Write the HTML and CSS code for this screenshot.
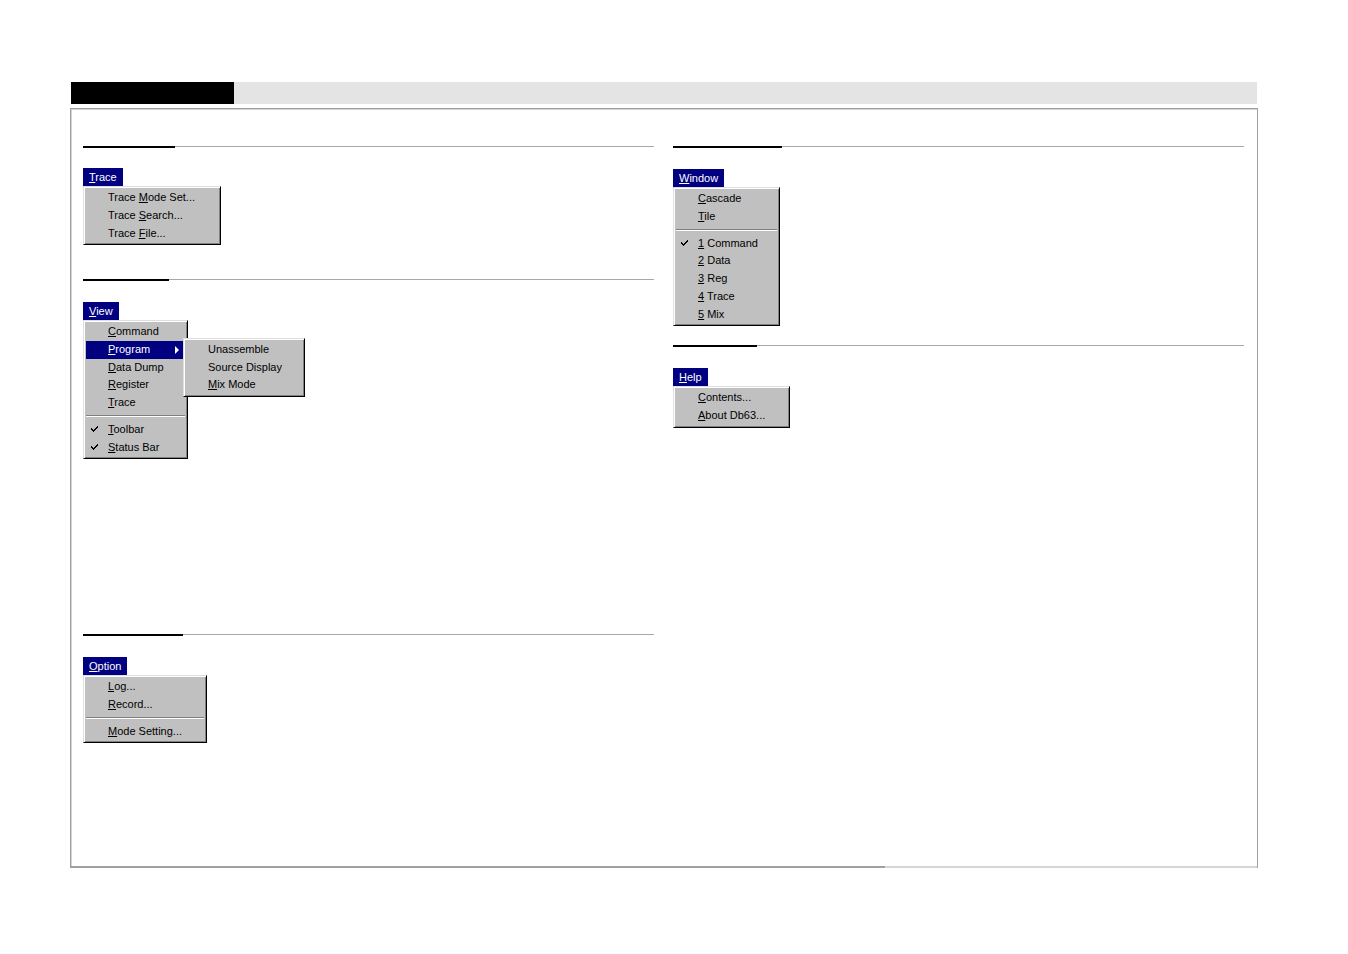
FILE: index.html
```html
<!DOCTYPE html>
<html>
<head>
<meta charset="utf-8">
<title>Menus</title>
<link rel="stylesheet" href="styles.css">
</head>
<body>
<div class="page">
  <div class="header">
    <div class="header-black"></div>
    <div class="header-rest"></div>
  </div>
  <div class="frame">
    <div class="columns">
      <div class="column">
        <section class="section sec-trace">
          <div class="rule"><div class="rule-strong rs-trace"></div></div>
          <div class="menu-title title-high"><u>T</u>race</div>
          <div class="menu m-trace">
            <div class="item"><span class="mark"></span><span>Trace <u>M</u>ode Set...</span></div>
            <div class="item"><span class="mark"></span><span>Trace <u>S</u>earch...</span></div>
            <div class="item"><span class="mark"></span><span>Trace <u>F</u>ile...</span></div>
          </div>
        </section>
        <section class="section sec-view">
          <div class="rule"><div class="rule-strong rs-view"></div></div>
          <div class="menu-title"><u>V</u>iew</div>
          <div class="menu m-view">
            <div class="item"><span class="mark"></span><span><u>C</u>ommand</span></div>
            <div class="item selected"><span class="mark"></span><span><u>P</u>rogram</span><span class="arrow"></span>
              <div class="menu submenu">
                <div class="item"><span class="mark"></span><span>Unassemble</span></div>
                <div class="item"><span class="mark"></span><span>Source Display</span></div>
                <div class="item"><span class="mark"></span><span><u>M</u>ix Mode</span></div>
              </div>
            </div>
            <div class="item"><span class="mark"></span><span><u>D</u>ata Dump</span></div>
            <div class="item"><span class="mark"></span><span><u>R</u>egister</span></div>
            <div class="item"><span class="mark"></span><span><u>T</u>race</span></div>
            <div class="sep"></div>
            <div class="item"><span class="mark"><svg width="7" height="7" viewBox="0 0 7 7"><path d="M0 2h1v1h1v1h1V3h1V2h1V1h1V0h1v2H6v1H5v1H4v1H3v1H2V5H1V4H0z" fill="#000"/></svg></span><span><u>T</u>oolbar</span></div>
            <div class="item"><span class="mark"><svg width="7" height="7" viewBox="0 0 7 7"><path d="M0 2h1v1h1v1h1V3h1V2h1V1h1V0h1v2H6v1H5v1H4v1H3v1H2V5H1V4H0z" fill="#000"/></svg></span><span><u>S</u>tatus Bar</span></div>
          </div>
        </section>
        <section class="section sec-option">
          <div class="rule"><div class="rule-strong rs-option"></div></div>
          <div class="menu-title"><u>O</u>ption</div>
          <div class="menu m-option">
            <div class="item"><span class="mark"></span><span><u>L</u>og...</span></div>
            <div class="item"><span class="mark"></span><span><u>R</u>ecord...</span></div>
            <div class="sep"></div>
            <div class="item"><span class="mark"></span><span><u>M</u>ode Setting...</span></div>
          </div>
        </section>
      </div>
      <div class="column">
        <section class="section sec-window">
          <div class="rule"><div class="rule-strong rs-window"></div></div>
          <div class="menu-title"><u>W</u>indow</div>
          <div class="menu m-window">
            <div class="item"><span class="mark"></span><span><u>C</u>ascade</span></div>
            <div class="item"><span class="mark"></span><span><u>T</u>ile</span></div>
            <div class="sep"></div>
            <div class="item"><span class="mark"><svg width="7" height="7" viewBox="0 0 7 7"><path d="M0 2h1v1h1v1h1V3h1V2h1V1h1V0h1v2H6v1H5v1H4v1H3v1H2V5H1V4H0z" fill="#000"/></svg></span><span><u>1</u> Command</span></div>
            <div class="item"><span class="mark"></span><span><u>2</u> Data</span></div>
            <div class="item"><span class="mark"></span><span><u>3</u> Reg</span></div>
            <div class="item"><span class="mark"></span><span><u>4</u> Trace</span></div>
            <div class="item"><span class="mark"></span><span><u>5</u> Mix</span></div>
          </div>
        </section>
        <section class="section sec-help">
          <div class="rule"><div class="rule-strong rs-help"></div></div>
          <div class="menu-title"><u>H</u>elp</div>
          <div class="menu m-help">
            <div class="item"><span class="mark"></span><span><u>C</u>ontents...</span></div>
            <div class="item"><span class="mark"></span><span><u>A</u>bout Db63...</span></div>
          </div>
        </section>
      </div>
    </div>
  </div>
</div>
</body>
</html>
```

FILE: styles.css
```css
html, body {
  margin: 0;
  padding: 0;
  background: #fff;
}

body {
  font-family: "Liberation Sans", Arial, sans-serif;
  font-size: 11px;
  color: #000;
}

.page {
  padding: 82px 0 0 70px;
  width: 1188px;
}

.header {
  display: flex;
  height: 22px;
  margin-left: 1px;
  width: 1186px;
}

.header-black {
  width: 163px;
  background: #000;
}

.header-rest {
  flex: 1;
  background: #e4e4e4;
}

.frame {
  position: relative;
  margin-top: 4px;
  height: 760px;
  border: 1px solid #a0a0a0;
  border-bottom: 2px solid #a0a0a0;
  box-shadow: inset 1px 1px 0 #d4d4d4;
  padding-top: 37px;
  box-sizing: border-box;
}

.frame::after {
  content: "";
  position: absolute;
  left: 814px;
  right: 0;
  bottom: -2px;
  height: 2px;
  background: #d6d6d6;
}

.columns {
  display: grid;
  grid-template-columns: 571px 571px;
  column-gap: 19px;
  padding: 0 12px;
}

.column {
  display: flex;
  flex-direction: column;
}

.section {
  display: flex;
  flex-direction: column;
  align-items: flex-start;
}

.sec-trace { height: 133px; }
.sec-view { height: 355px; }
.sec-window { height: 199px; }

.rule {
  align-self: stretch;
  height: 2px;
  border-top: 1px solid #a8a8a8;
  box-sizing: border-box;
  margin-bottom: 21px;
  overflow: visible;
}

.rule-strong {
  height: 2px;
  margin-top: -1px;
  background: #000;
}

.rs-trace { width: 92px; }
.rs-view { width: 86px; }
.rs-option { width: 100px; }
.rs-window { width: 109px; }
.rs-help { width: 84px; }

.menu-title {
  background: #000080;
  color: #fff;
  height: 18px;
  line-height: 18px;
  padding: 0 6px;
  box-sizing: border-box;
}

.title-high { margin-top: -1px; }

.menu {
  background: #c0c0c0;
  border: 1px solid;
  border-color: #dfdfdf #000 #000 #dfdfdf;
  box-shadow: inset 1px 1px 0 #fff, inset -1px -1px 0 #808080;
  padding: 2px 2px;
  box-sizing: border-box;
}

.m-trace { width: 138px; }
.m-view { width: 105px; }
.m-option { width: 124px; }
.m-window { width: 107px; }
.m-help { width: 117px; }

.item {
  position: relative;
  display: flex;
  align-items: center;
  height: 17.75px;
  line-height: 17.75px;
  white-space: nowrap;
}

.mark {
  width: 22px;
  flex: none;
  display: flex;
  align-items: center;
  padding-left: 5px;
  box-sizing: border-box;
}

.mark svg {
  display: block;
}

.item.selected {
  background: #000080;
  color: #fff;
}

.arrow {
  margin-left: auto;
  margin-right: 6px;
  width: 0;
  height: 0;
  border-top: 4px solid transparent;
  border-bottom: 4px solid transparent;
  border-left: 4px solid #fff;
}

.submenu {
  position: absolute;
  left: 97px;
  top: -3px;
  width: 122px;
  color: #000;
  z-index: 2;
}

.sep {
  height: 0;
  border-top: 1px solid #808080;
  border-bottom: 1px solid #fff;
  margin: 3.5px 0 3.5px;
}

u {
  text-decoration: underline;
  text-underline-offset: 1px;
}
```
